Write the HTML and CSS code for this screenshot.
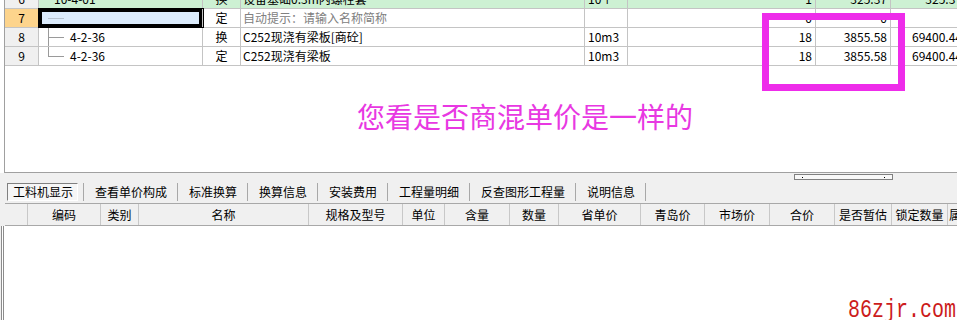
FILE: index.html
```html
<!DOCTYPE html>
<html lang="zh-CN">

<head>
  <meta charset="UTF-8">
  <meta name="viewport" content="width=device-width, initial-scale=1.0">
  <title>工料机显示</title>
  <link rel="stylesheet" href="styles.css">
</head>

<body>
  <!-- Upper grid: quota list -->
  <div class="upper">
    <div class="grid-clip">
      <div class="row row-green">
        <div class="c num">6</div>
        <div class="c code"><span class="code-text">10-4-01</span></div>
        <div class="c kind">换</div>
        <div class="c name">设备基础0.3m内螺栓套</div>
        <div class="c unit">10个</div>
        <div class="c qty">1</div>
        <div class="c price">325.37</div>
        <div class="c total">325.37</div>
      </div>
      <div class="row">
        <div class="c num num-active">7</div>
        <div class="c code code-active"><span class="branch branch-faint"></span></div>
        <div class="c kind">定</div>
        <div class="c name hint">自动提示：请输入名称简称</div>
        <div class="c unit"></div>
        <div class="c qty">0</div>
        <div class="c price">0</div>
        <div class="c total"></div>
      </div>
      <div class="row">
        <div class="c num">8</div>
        <div class="c code"><span class="branch branch-mid"></span><span class="code-text">4-2-36</span></div>
        <div class="c kind">换</div>
        <div class="c name">C252现浇有梁板[商砼]</div>
        <div class="c unit">10m3</div>
        <div class="c qty">18</div>
        <div class="c price">3855.58</div>
        <div class="c total">69400.44</div>
      </div>
      <div class="row">
        <div class="c num">9</div>
        <div class="c code"><span class="branch branch-last"></span><span class="code-text">4-2-36</span></div>
        <div class="c kind">定</div>
        <div class="c name">C252现浇有梁板</div>
        <div class="c unit">10m3</div>
        <div class="c qty">18</div>
        <div class="c price">3855.58</div>
        <div class="c total">69400.44</div>
      </div>
    </div>

    <p class="note">您看是否商混单价是一样的</p>

    <!-- Hand drawn highlight over the numbers -->
    <div class="mark-box"></div>
  </div>

  <!-- Lower part: tabs and resource grid -->
  <div class="lower">
    <div class="splitter">
      <span class="grip"><i class="dot"></i><i class="dot"></i></span>
    </div>

    <div class="tabs">
      <span class="tab tab-active">工料机显示</span>
      <span class="tab-sep"></span>
      <span class="tab">查看单价构成</span>
      <span class="tab-sep"></span>
      <span class="tab">标准换算</span>
      <span class="tab-sep"></span>
      <span class="tab">换算信息</span>
      <span class="tab-sep"></span>
      <span class="tab">安装费用</span>
      <span class="tab-sep"></span>
      <span class="tab">工程量明细</span>
      <span class="tab-sep"></span>
      <span class="tab">反查图形工程量</span>
      <span class="tab-sep"></span>
      <span class="tab">说明信息</span>
      <span class="tab-sep"></span>
    </div>

    <div class="detail">
      <div class="detail-head">
        <div class="h"></div>
        <div class="h">编码</div>
        <div class="h">类别</div>
        <div class="h">名称</div>
        <div class="h">规格及型号</div>
        <div class="h">单位</div>
        <div class="h">含量</div>
        <div class="h">数量</div>
        <div class="h">省单价</div>
        <div class="h">青岛价</div>
        <div class="h">市场价</div>
        <div class="h">合价</div>
        <div class="h">是否暂估</div>
        <div class="h">锁定数量</div>
        <div class="h h-left">属性</div>
      </div>
      <div class="detail-body"></div>
    </div>

    <span class="site">86zjr.com</span>
  </div>
</body>

</html>
```

FILE: styles.css
```css
/* General page */
body {
  margin: 0;
  width: 957px;
  height: 320px;
  overflow: hidden;
  background: #fff;
  font-family: "Noto Sans CJK SC", "Liberation Sans", sans-serif;
  font-size: 12px;
  color: #000;
}

/* Upper quota grid */
.upper {
  position: relative;
  height: 172px;
  margin-left: 4px;
  border-left: 1px solid #a0a0a0;
  border-bottom: 1px solid #a0a0a0;
}

.grid-clip {
  height: 66px;
  overflow: hidden;
}

.row {
  display: grid;
  grid-template-columns: 34px 164px 38px 344px 43px 188px 75px 75px;
  height: 19px;
  box-sizing: border-box;
  border-bottom: 1px solid #c4c4c4;
}

.row-green {
  margin-top: -10px;
  background: #cdf1d3;
}

.c {
  display: flex;
  align-items: center;
  box-sizing: border-box;
  border-right: 1px solid #c4c4c4;
  white-space: nowrap;
  overflow: hidden;
  line-height: 18px;
}

.num {
  justify-content: center;
  background: #f0f0f0;
}

.num-active {
  background: #fdd48c;
}

.code {
  position: relative;
  padding-left: 9px;
}

.code-active {
  z-index: 1;
  background: #dcecfc;
  box-shadow: 0 0 0 1px #000, inset 0 0 0 3px #000;
}

.code-text {
  margin-left: 6px;
}

/* Tree connector lines */
.branch {
  position: relative;
  width: 16px;
  height: 1px;
  background: #9a9a9a;
}

.branch-faint {
  background: #b8c4d0;
}

.branch-mid::before,
.branch-last::before {
  content: "";
  position: absolute;
  left: 0;
  width: 1px;
  background: #9a9a9a;
}

.branch-mid::before {
  top: -10px;
  height: 19px;
}

.branch-last::before {
  top: -10px;
  height: 10px;
}

.kind {
  justify-content: center;
}

.name {
  padding-left: 2px;
}

.hint {
  color: #808080;
}

.unit {
  padding-left: 3px;
}

.qty,
.price,
.total {
  justify-content: flex-end;
  padding-right: 3px;
}

.total {
  overflow: visible;
}

.note {
  margin: 34px 0 0 352px;
  font-size: 28px;
  line-height: 32px;
  color: #e838e2;
}

.mark-box {
  position: absolute;
  top: 13px;
  left: 757px;
  width: 143px;
  height: 78px;
  box-sizing: border-box;
  border: 7px solid #ee2cea;
}

/* Lower area */
.lower {
  position: relative;
  height: 147px;
  background: #f0f0f0;
}

.splitter {
  height: 8px;
  padding-top: 1px;
  box-sizing: border-box;
}

.grip {
  display: flex;
  justify-content: space-between;
  align-items: center;
  width: 99px;
  height: 6px;
  margin-left: 794px;
  padding: 0 7px;
  box-sizing: border-box;
  border: 1px solid #808080;
  background: #f8f8f8;
}

.dot {
  width: 1px;
  height: 1px;
  background: #000;
}

.tabs {
  display: flex;
  align-items: center;
  height: 22px;
}

.tab {
  padding: 0 10px 0 11px;
  line-height: 16px;
  white-space: nowrap;
}

.tab-active {
  margin: 0 5px 0 7px;
  padding: 0 4px 0 5px;
  border: 1px solid;
  border-color: #808080 #ffffff #ffffff #808080;
  background: #f6f6f6;
}

.tab-sep {
  width: 1px;
  height: 18px;
  background: #a8a8a8;
}

.detail {
  margin-left: 1px;
}

.detail-head {
  display: grid;
  grid-template-columns: 23px 73px 38px 170px 94px 42px 65px 49px 82px 64px 65px 65px 57px 56px 80px;
  height: 23px;
  margin-left: 4px;
  box-sizing: border-box;
  border-top: 1px solid #a8a8a8;
  border-bottom: 1px solid #a8a8a8;
}

.h {
  display: flex;
  align-items: center;
  justify-content: center;
  box-sizing: border-box;
  border-right: 1px solid #c8c8c8;
  white-space: nowrap;
  overflow: hidden;
}

.h-left {
  justify-content: flex-start;
  padding-left: 1px;
}

.detail-body {
  height: 94px;
  background: #fff;
  border-left: 3px double #8c8c8c;
}

.site {
  position: absolute;
  top: 129px;
  left: 848px;
  font-family: "Liberation Mono", monospace;
  font-size: 20px;
  line-height: 20px;
  color: #cc1c1c;
  transform: scaleY(1.3);
  transform-origin: 0 15px;
}
```
